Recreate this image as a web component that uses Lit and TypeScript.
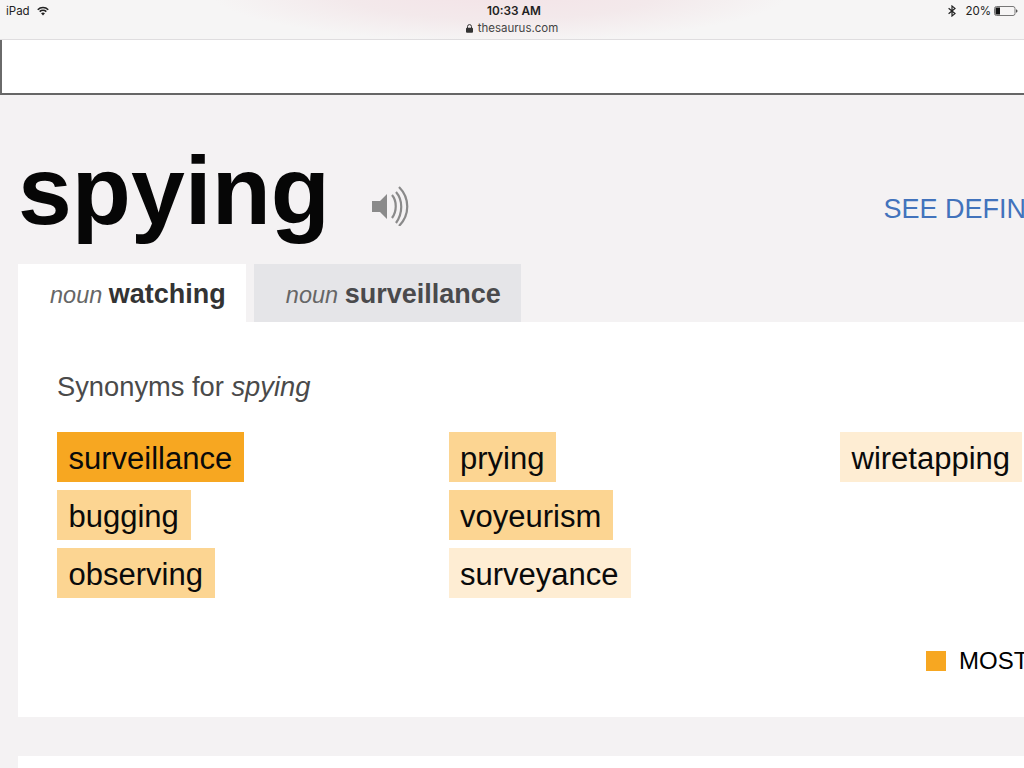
import { html, css, LitElement } from "lit";
import { customElement } from "lit/decorators.js";

@customElement("app-root")
export class AppRoot extends LitElement {
  static styles = css`
    :host {
      display: block;
      width: 1024px;
      height: 768px;
      overflow: hidden;
      background: #f4f2f3;
      font-family: "Liberation Sans", Arial, sans-serif;
      color: #000;
    }
    .status {
      height: 39px;
      display: grid;
      grid-template-columns: 1fr auto 1fr;
      padding: 0 6px;
      border-bottom: 1px solid #dfdddf;
      background: radial-gradient(ellipse 290px 50px at 500px -8px, #f3e3e7 0%, #f3e9eb 55%, #f6f5f5 100%), #f6f5f5;
      font-family: Inter, "Liberation Sans", sans-serif;
      font-size: 11.5px;
      color: #222;
    }
    .status-left {
      display: flex;
      align-items: center;
      gap: 7px;
      height: 21px;
    }
    .status-mid {
      text-align: center;
      margin-left: 4px;
      padding-top: 3px;
      line-height: 16px;
    }
    .time {
      font-weight: 600;
      font-size: 11.8px;
    }
    .url {
      display: flex;
      align-items: center;
      justify-content: center;
      gap: 5px;
      font-size: 11.5px;
      color: #444;
      margin: 1px 0 0 -4px;
    }
    .status-right {
      display: flex;
      align-items: center;
      justify-content: flex-end;
      height: 21px;
      gap: 3px;
    }
    .bt {
      margin-right: 6px;
    }
    .searchbar {
      height: 53px;
      background: #fff;
      border-left: 2px solid #6a6a6a;
      border-bottom: 2px solid #666;
    }
    .headword {
      height: 169px;
      display: flex;
      align-items: flex-end;
      white-space: nowrap;
    }
    h1 {
      flex: none;
      margin: 0 0 18px 18px;
      font-size: 96.8px;
      line-height: 110px;
      font-weight: 700;
      color: #060606;
    }
    .speaker {
      flex: none;
      margin: 0 0 38px 42px;
      display: block;
    }
    .define {
      flex: none;
      margin: 0 0 39px 473.5px;
      font-size: 27px;
      line-height: 32px;
      color: #4273bc;
    }
    .tabs {
      display: flex;
      margin-left: 18px;
      gap: 8px;
      height: 58px;
    }
    .tab {
      padding: 14px 20px 0 32px;
      font-size: 23.5px;
      line-height: 32px;
      background: #fff;
      color: #333;
      white-space: nowrap;
    }
    .tab.off {
      background: #e5e5e8;
      color: #4a4a4c;
    }
    .tab em {
      color: #666;
      font-weight: 400;
    }
    .tab b {
      font-size: 27px;
    }
    .panel {
      margin-left: 18px;
      height: 395px;
      background: #fff;
      padding: 48px 0 0 39px;
      box-sizing: border-box;
    }
    h2 {
      margin: 0;
      font-size: 27.3px;
      line-height: 34px;
      font-weight: 400;
      color: #4a4a4a;
    }
    .words {
      display: grid;
      grid-template-columns: repeat(3, 391.5px);
      margin-top: 28px;
    }
    .col {
      display: flex;
      flex-direction: column;
      align-items: flex-start;
      gap: 8px;
    }
    .word {
      height: 50px;
      line-height: 54px;
      padding: 0 12px 0 11.5px;
      font-size: 31px;
      white-space: nowrap;
      color: #0a0a0a;
    }
    .hot {
      background: #f7a721;
    }
    .warm {
      background: #fcd592;
    }
    .mild {
      background: #feedd3;
    }
    .legend {
      display: flex;
      align-items: center;
      gap: 13px;
      margin: 49px 0 0 869px;
      font-size: 24px;
      line-height: 28px;
      white-space: nowrap;
    }
    .swatch {
      width: 20px;
      height: 20px;
      background: #f7a721;
      flex: none;
    }
    .next {
      margin: 39px 0 0 18px;
      height: 60px;
      background: #fff;
    }
  `;

  render() {
    const columns: [string, string][][] = [
      [
        ["surveillance", "hot"],
        ["bugging", "warm"],
        ["observing", "warm"],
      ],
      [
        ["prying", "warm"],
        ["voyeurism", "warm"],
        ["surveyance", "mild"],
      ],
      [["wiretapping", "mild"]],
    ];
    return html`
      <div class="status">
        <div class="status-left">
          <span>iPad</span>
          <svg width="12" height="10" viewBox="0 0 13 10" fill="none" stroke="#222" stroke-width="1.7">
            <path d="M.8 3.6C4 .5 9 .5 12.2 3.6" />
            <path d="M2.9 5.6C4.9 3.8 8.1 3.8 10.1 5.6" />
            <path d="M6.5 9.8 4.4 7.5C5.7 6.5 7.3 6.5 8.6 7.5Z" fill="#222" stroke="none" />
          </svg>
        </div>
        <div class="status-mid">
          <div class="time">10:33 AM</div>
          <div class="url">
            <svg width="7" height="9" viewBox="0 0 7 9">
              <path d="M1.5 4V2.6a2 2 0 0 1 4 0V4" fill="none" stroke="#333" stroke-width="1" />
              <rect x="0" y="3.8" width="7" height="5" rx="1" fill="#333" />
            </svg>
            <span>thesaurus.com</span>
          </div>
        </div>
        <div class="status-right">
          <svg class="bt" width="8" height="12" viewBox="0 0 8 12" fill="none" stroke="#222" stroke-width="1.2">
            <path d="M.6 3.2 7 8.6 4 11V1L7 3.4.6 8.8" />
          </svg>
          <span>20%</span>
          <svg width="24" height="10" viewBox="0 0 24 10">
            <rect x=".5" y=".5" width="20.5" height="9" rx="2" fill="none" stroke="#777" />
            <rect x="1.5" y="1.5" width="4.5" height="7" fill="#111" />
            <path d="M22 3.5c1 0 1.5.6 1.5 1.500S23 6.500 22 6.500Z" fill="#555" />
          </svg>
        </div>
      </div>
      <div class="searchbar"></div>
      <div class="headword">
        <h1>spying</h1>
        <svg class="speaker" width="38" height="40" viewBox="0 0 38 40" fill="none" stroke="#8a8a8a" stroke-width="2.2">
          <path d="M0 15H8L15 8V33L8 26H0Z" fill="#8a8a8a" stroke="none" />
          <path d="M20 9C25 15 25 25 20 32" />
          <path d="M24 6C31 14 31 27 24 37" />
          <path d="M27 1C38 12 38 29 27 40" />
        </svg>
        <div class="define">SEE DEFINITION</div>
      </div>
      <div class="tabs">
        <div class="tab"><em>noun</em> <b>watching</b></div>
        <div class="tab off"><em>noun</em> <b>surveillance</b></div>
      </div>
      <div class="panel">
        <h2>Synonyms for <em>spying</em></h2>
        <div class="words">
          ${columns.map(
            (col) => html`<div class="col">
              ${col.map(([word, level]) => html`<div class="word ${level}">${word}</div>`)}
            </div>`
          )}
        </div>
        <div class="legend"><span class="swatch"></span><span>MOST</span></div>
      </div>
      <div class="next"></div>
    `;
  }
}
